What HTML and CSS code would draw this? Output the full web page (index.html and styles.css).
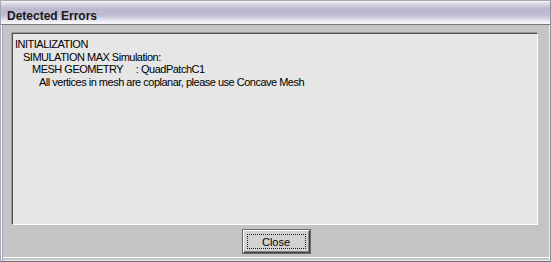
FILE: index.html
```html
<!DOCTYPE html>
<html lang="en">
<head>
    <meta charset="UTF-8">
    <title>Detected Errors</title>
    <link rel="stylesheet" href="styles.css">
</head>
<body>
    <div class="window">
        <div class="titlebar">Detected Errors</div>

        <div class="client">
            <div class="log">
                <div class="line lvl0">INITIALIZATION</div>
                <div class="line lvl1">SIMULATION MAX Simulation:</div>
                <div class="line lvl2">MESH GEOMETRY&nbsp;&nbsp;&nbsp;&nbsp;&nbsp;: QuadPatchC1</div>
                <div class="line lvl3">All vertices in mesh are coplanar, please use Concave Mesh</div>
            </div>

            <div class="footer">
                <button class="button"><span class="focus">Close</span></button>
            </div>
        </div>
    </div>
</body>
</html>
```

FILE: styles.css
```css
body {
    margin: 0;
    padding: 0;
    background-color: #c4c4c4;
    font-family: "Liberation Sans", Arial, sans-serif;
    color: #000;
}
.window {
    width: 551px;
    height: 262px;
    box-sizing: border-box;
    display: flex;
    flex-direction: column;
    background-color: #c4c4c4;
    border: 1px solid #a8a8b4;
    border-bottom-color: #6c6a78;
    border-right-color: #8c8a98;
    box-shadow: inset 1px 1px 0 #fafafa, inset 2px 0 0 #a6a4ba, inset -1px -1px 0 #f0f0f0, inset 0 -3px 0 #c4c4c4, inset 0 -4px 0 #ffffff;
}
.titlebar {
    height: 24px;
    box-sizing: border-box;
    padding: 8px 0 0 6px;
    font-size: 12px;
    font-weight: bold;
    color: #181818;
    background: linear-gradient(to bottom, #f6f6fa 0, #d8d6e4 3px, #bcb8cf 8px, #bfbbd2 14px, #e4e2ee 19px, #f7f7fb 22px, #f4f4f8 23px);
    border-bottom: 1px solid #7c7a86;
}
.client {
    flex: 1;
    display: flex;
    flex-direction: column;
    padding: 8px 12px 0 11px;
}
.log {
    height: 192px;
    box-sizing: border-box;
    padding: 4px 0 0 2px;
    background-color: #e6e6e6;
    border-top: 1px solid #505050;
    border-left: 1px solid #505050;
    border-right: 1px solid #ffffff;
    border-bottom: 1px solid #ffffff;
    box-shadow: -1px -1px 0 #9a9a9a;
    font-size: 11px;
    line-height: 12.7px;
}
.line {
    white-space: nowrap;
    letter-spacing: -0.5px;
}
.lvl1 {
    padding-left: 8px;
}
.lvl2 {
    padding-left: 17px;
}
.lvl3 {
    padding-left: 24px;
}
.footer {
    display: flex;
    justify-content: center;
    padding: 5px 0 0 0;
}
.button {
    width: 67px;
    height: 23px;
    padding: 3px;
    margin-left: 2px;
    box-sizing: border-box;
    background-color: #d2d2d2;
    border-top: 1px solid #ffffff;
    border-left: 1px solid #ffffff;
    border-right: 1px solid #404040;
    border-bottom: 1px solid #404040;
    box-shadow: inset -1px -1px 0 #8a8a8a, 0 0 0 1px #6a6a6a;
    font-family: "Liberation Sans", Arial, sans-serif;
    font-size: 11px;
    color: #000;
    display: flex;
}
.focus {
    flex: 1;
    border: 1px dotted #202020;
    display: flex;
    align-items: center;
    justify-content: center;
}
```
